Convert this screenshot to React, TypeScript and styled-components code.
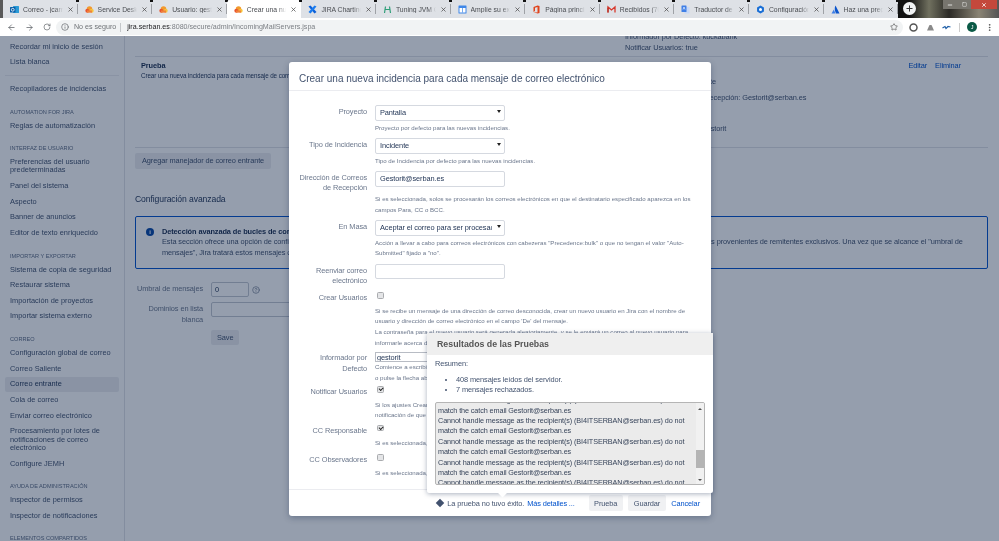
import React from 'react';
import styled, { createGlobalStyle } from 'styled-components';
import { ArrowLeft, ArrowRight, RotateCw, Info, Star, MoreVertical, X, Plus, Minus, Square, CircleHelp } from 'lucide-react';

const GlobalStyle = createGlobalStyle`
  html, body {
    margin: 0;
    padding: 0;
    background: #fff;
  }
  * {
    box-sizing: border-box;
  }
`;

const Root = styled.div`
  width: 999px;
  height: 541px;
  overflow: hidden;
  display: flex;
  flex-direction: column;
  font-family: 'Liberation Sans', Arial, sans-serif;
  font-size: 7.4px;
  color: #253858;
  filter: blur(0.35px);
`;

/* browser chrome */
const TabStrip = styled.div`
  height: 18px;
  display: flex;
  flex-shrink: 0;
  background: linear-gradient(90deg, #5a5a5a 0, #5a5a5a 3px, #111 90%, #111 91%, #70705f 93%, #2b2a26 95%, #8a8474 98%, #555 100%);
`;

const Tabs = styled.div`
  display: flex;
  margin-left: 3px;
  width: 895px;
  background: #dee1e6;
`;

const Tab = styled.div<{ $active?: boolean }>`
  position: relative;
  width: 74.6px;
  height: 18px;
  display: flex;
  align-items: center;
  padding: 0 4px 0 7px;
  gap: 4px;
  font-size: 6.8px;
  color: #4a4d52;
  background: ${(p) => (p.$active ? '#fff' : 'transparent')};
  border-radius: ${(p) => (p.$active ? '4px 4px 0 0' : '0')};
  &::after {
    content: '';
    position: absolute;
    right: 0;
    top: 4px;
    height: 10px;
    width: 1px;
    background: ${(p) => (p.$active ? 'transparent' : '#9ea1a6')};
  }
  &::before {
    content: '';
    position: absolute;
    right: -1px;
    top: 0;
    width: 3px;
    height: 1.5px;
    background: #111;
  }
`;

const TabTitle = styled.span`
  flex: 1;
  white-space: nowrap;
  overflow: hidden;
  -webkit-mask-image: linear-gradient(90deg, #000 80%, transparent 100%);
  mask-image: linear-gradient(90deg, #000 80%, transparent 100%);
`;

const NewTab = styled.div`
  width: 13px;
  height: 13px;
  margin: 2px 0 0 5px;
  border-radius: 50%;
  background: #f1f3f4;
  color: #333;
  display: flex;
  align-items: center;
  justify-content: center;
`;

const WindowControls = styled.div`
  margin-left: auto;
  margin-right: 2px;
  height: 9px;
  display: flex;
`;

const WindowButton = styled.div<{ $close?: boolean }>`
  width: ${(p) => (p.$close ? '26px' : '14px')};
  display: flex;
  align-items: center;
  justify-content: center;
  color: #fff;
  background: ${(p) => (p.$close ? '#c4483c' : '#77756e')};
`;

const AddressBar = styled.div`
  height: 18px;
  flex-shrink: 0;
  display: flex;
  align-items: center;
  background: #fff;
  color: #5f6368;
  padding-left: 7px;
`;

const NavIcons = styled.div`
  width: 49px;
  display: flex;
  gap: 9px;
  color: #5f6368;
`;

const UrlBox = styled.div`
  width: 847px;
  height: 15px;
  border-radius: 8px;
  background: #f1f3f4;
  display: flex;
  align-items: center;
  padding: 0 5px;
  gap: 5px;
  font-size: 7.1px;
`;

const Insecure = styled.span`
  color: #6e7276;
  padding-right: 4px;
  border-right: 1px solid #c4c7ca;
  line-height: 9px;
`;

const Url = styled.span`
  margin-left: 1px;
  flex: 1;
  color: #7b7f84;
  b {
    font-weight: 400;
    color: #202124;
  }
`;

const Extensions = styled.div`
  display: flex;
  align-items: center;
  margin-left: 6px;
  gap: 7.5px;
`;

const Divider = styled.div`
  width: 1px;
  height: 9px;
  background: #ccc;
`;

const Avatar = styled.div`
  width: 10px;
  height: 10px;
  border-radius: 50%;
  background: #0b5a46;
  color: #fff;
  font-size: 5.5px;
  display: flex;
  align-items: center;
  justify-content: center;
`;

/* jira page */
const Page = styled.div`
  position: relative;
  flex: 1;
  display: flex;
  overflow: hidden;
  background: #fff;
`;

const Overlay = styled.div`
  position: absolute;
  inset: 0;
  background: rgba(9, 30, 66, 0.43);
`;

const Sidebar = styled.nav`
  width: 125px;
  flex-shrink: 0;
  padding: 3px 5px 0;
  border-right: 1px solid #dfe1e6;
`;

const NavItem = styled.div<{ $selected?: boolean }>`
  padding: 3.67px 5px;
  line-height: 8.33px;
  border-radius: 2px;
  color: ${(p) => (p.$selected ? '#253858' : '#42526e')};
  background: ${(p) => (p.$selected ? '#ebecf0' : 'transparent')};
`;

const NavHeading = styled.div`
  margin: 10.8px 0 1.8px;
  padding: 0 5px;
  font-size: 5.6px;
  line-height: 8.33px;
  color: #5e6c84;
  text-transform: uppercase;
`;

const NavRule = styled.div`
  height: 1px;
  margin: 5px 0 5px;
  background: #ebecf0;
`;

const Main = styled.main`
  flex: 1;
  min-width: 0;
  padding: 0 11px 0 10px;
  letter-spacing: -0.1px;
`;

const ScrolledLines = styled.div`
  margin: -3.6px 0 0 490px;
  padding-bottom: 2px;
  line-height: 10.7px;
  color: #42526e;
`;

const HandlerRow = styled.div`
  display: grid;
  grid-template-columns: 490px 1fr auto;
  height: 92px;
  border-top: 1px solid #dfe1e6;
  border-bottom: 1px solid #dfe1e6;
`;

const HandlerInfo = styled.div`
  padding: 4px 0 0 6px;
  line-height: 10px;
  small {
    font-size: 6.3px;
    display: block;
    color: #253858;
  }
  strong {
    color: #172b4d;
  }
`;

const HandlerDetails = styled.div`
  padding-top: 2px;
  line-height: 15.5px;
  color: #42526e;
`;

const HandlerActions = styled.div`
  display: flex;
  gap: 8px;
  padding: 4px 27px 0 0;
  line-height: 10px;
  color: #0052cc;
`;

const PageButton = styled.button`
  display: block;
  height: 16px;
  margin: 5px 0 0;
  padding: 0 7px;
  border: none;
  border-radius: 2px;
  background: #ebecf0;
  font: inherit;
  letter-spacing: inherit;
  color: #42526e;
`;

const SectionTitle = styled.h2`
  margin: 24.5px 0 9.5px;
  font-size: 8.6px;
  line-height: 13px;
  font-weight: 400;
  color: #253858;
`;

const InfoPanel = styled.div`
  height: 53px;
  display: flex;
  gap: 8px;
  padding: 10px 0 0 10px;
  border: 1px solid #0052cc;
  border-radius: 2px;
  line-height: 10.4px;
  white-space: nowrap;
  overflow: hidden;
  color: #42526e;
  strong {
    display: block;
    color: #172b4d;
  }
`;

const InfoDot = styled.div`
  flex-shrink: 0;
  width: 8px;
  height: 8px;
  margin-top: 1px;
  border-radius: 50%;
  background: #0747a6;
  color: #fff;
  font-size: 6px;
  font-weight: 700;
  line-height: 8px;
  text-align: center;
`;

const SettingsForm = styled.div`
  margin-top: 13px;
  display: flex;
  flex-direction: column;
  align-items: flex-start;
  gap: 5px;
`;

const SettingRow = styled.div`
  display: grid;
  grid-template-columns: 68px 1fr;
  column-gap: 8px;
`;

const SettingLabel = styled.label`
  padding-top: 2px;
  text-align: right;
  line-height: 10.7px;
  white-space: nowrap;
  color: #6b778c;
`;

const SettingField = styled.div`
  display: flex;
  align-items: flex-start;
  gap: 3px;
  color: #6b778c;
`;

const PageInput = styled.input<{ $width: number }>`
  width: ${(p) => p.$width}px;
  height: 15px;
  padding: 0 3px;
  border: 1px solid #c1c7d0;
  border-radius: 2px;
  font: inherit;
  color: #253858;
  background: #fff;
`;

const SaveButton = styled(PageButton)`
  height: 15px;
  margin: 0 0 0 76px;
  padding: 0 6px;
`;

/* dialog */
const Modal = styled.section`
  position: absolute;
  left: 289px;
  top: 26px;
  width: 422px;
  height: 454px;
  display: flex;
  flex-direction: column;
  border-radius: 3px;
  background: #fff;
  letter-spacing: -0.1px;
  box-shadow: 0 2px 6px rgba(9, 30, 66, 0.3);
`;

const ModalHeader = styled.header`
  height: 29px;
  flex-shrink: 0;
  padding: 11px 0 0 10px;
  border-bottom: 1px solid #ebecf0;
  font-size: 10px;
  letter-spacing: 0;
  line-height: 12px;
  color: #42526e;
`;

const ModalBody = styled.div`
  flex: 1;
  min-height: 0;
  overflow: hidden;
  padding: 14px 0 0;
`;

const FormRow = styled.div<{ $gap?: number }>`
  display: grid;
  grid-template-columns: 78px 1fr;
  column-gap: 8px;
  margin-bottom: ${(p) => p.$gap ?? 4.8}px;
`;

const FormLabel = styled.label`
  padding-top: 1.6px;
  text-align: right;
  line-height: 10.7px;
  white-space: nowrap;
  color: #6b778c;
`;

const Help = styled.div`
  grid-column: 2;
  font-size: 6.12px;
  letter-spacing: 0;
  line-height: 10.7px;
  white-space: nowrap;
  color: #6b778c;
`;

const SelectWrap = styled.div`
  position: relative;
  width: 130px;
  height: 15.5px;
  margin-bottom: 2px;
  &::after {
    content: '';
    position: absolute;
    right: 4px;
    top: 5px;
    border: 2px solid transparent;
    border-top: 3px solid #222;
  }
`;

const Select = styled.select`
  width: 100%;
  height: 100%;
  appearance: none;
  padding: 0 12px 0 4px;
  border: 1px solid #d5d9e0;
  border-radius: 2px;
  background: #fff;
  font: inherit;
  letter-spacing: inherit;
  color: #253858;
`;

const TextInput = styled.input`
  width: 130px;
  height: 15.5px;
  margin-bottom: 2px;
  padding: 0 4px;
  border: 1px solid #d5d9e0;
  border-radius: 2px;
  background: #fff;
  font: inherit;
  letter-spacing: inherit;
  color: #253858;
`;

const SmallInput = styled(TextInput)`
  display: block;
  height: 10.5px;
  margin-bottom: 0;
  padding: 0 1px;
  border-radius: 0;
  border-color: #b8bcc4;
`;

const Checkbox = styled.input`
  appearance: none;
  position: relative;
  width: 6.5px;
  height: 6.5px;
  margin: 0.5px 0 0 2px;
  border: 1px solid #a9abae;
  border-radius: 1.5px;
  background: #e4e5e7;
  &:checked::after {
    content: '';
    position: absolute;
    left: 0.6px;
    top: 0;
    width: 3.4px;
    height: 2px;
    border-left: 1.3px solid #222;
    border-bottom: 1.3px solid #222;
    transform: rotate(-45deg);
  }
`;

const CheckCell = styled.div`
  height: 14px;
`;

const ModalFooter = styled.footer`
  height: 27px;
  flex-shrink: 0;
  display: flex;
  align-items: center;
  justify-content: flex-end;
  padding-right: 11px;
  border-top: 1px solid #ebecf0;
  color: #42526e;
`;

const FailNote = styled.span`
  display: flex;
  align-items: center;
  gap: 3px;
  margin-right: 14px;
  a {
    color: #0052cc;
    letter-spacing: -0.15px;
  }
`;

const FailIcon = styled.span`
  width: 6px;
  height: 6px;
  background: #42526e;
  transform: rotate(45deg);
  margin-right: 1px;
`;

const FooterButton = styled.button`
  height: 16px;
  padding: 0 5.5px;
  margin-right: 5.5px;
  border: none;
  border-radius: 2px;
  background: #f0f1f3;
  font: inherit;
  letter-spacing: inherit;
  color: #42526e;
`;

const CancelLink = styled.a`
  color: #0052cc;
`;

/* results popup */
const Popup = styled.div`
  position: absolute;
  left: 138px;
  top: 271px;
  width: 286px;
  height: 160px;
  background: #fff;
  border-radius: 2px;
  box-shadow: 0 1px 5px rgba(9, 30, 66, 0.35);
  &::after {
    content: '';
    position: absolute;
    left: 72px;
    bottom: -3px;
    width: 7px;
    height: 7px;
    background: #fff;
    transform: rotate(45deg);
  }
`;

const PopupTitle = styled.div`
  height: 22px;
  padding-left: 10px;
  background: #efefef;
  font-size: 8.8px;
  font-weight: 700;
  letter-spacing: 0;
  line-height: 22px;
  color: #555;
`;

const PopupContent = styled.div`
  padding: 4px 8px 0;
  line-height: 10.4px;
  color: #42526e;
`;

const ResultList = styled.ul`
  margin: 5.5px 0 6px;
  padding-left: 21px;
  li {
    padding: 0;
  }
`;

const LogBox = styled.div`
  height: 83px;
  display: flex;
  overflow: hidden;
  border: 1px solid #b5b5b5;
  border-radius: 2px;
  background: #ebebeb;
`;

const LogText = styled.div`
  flex: 1;
  margin-top: -7.5px;
  padding-left: 2px;
  font-size: 7.25px;
  color: #37445a;
`;

const Scrollbar = styled.div`
  width: 8px;
  flex-shrink: 0;
  display: flex;
  flex-direction: column;
  align-items: center;
  padding-top: 3px;
  background: #f1f1f1;
`;

const ScrollArrow = styled.div<{ $down?: boolean }>`
  border: 2px solid transparent;
  ${(p) => (p.$down ? 'border-top: 2.5px solid #505050; margin-top: auto; margin-bottom: 1px;' : 'border-bottom: 2.5px solid #505050;')}
`;

const ScrollThumb = styled.div`
  width: 100%;
  height: 18px;
  margin-top: 40px;
  background: #b4b4b4;
`;

const tabs = [
  { title: 'Correo - jcarra', icon: 'outlook' },
  { title: 'Service Desk', icon: 'cloud' },
  { title: 'Usuario: gestor', icon: 'cloud' },
  { title: 'Crear una nuev', icon: 'cloud', active: true },
  { title: 'JIRA Charting F', icon: 'cross' },
  { title: 'Tuning JVM Ga', icon: 'tuning' },
  { title: 'Amplíe su expe', icon: 'doc' },
  { title: 'Página principa', icon: 'office' },
  { title: 'Recibidos (704', icon: 'gmail' },
  { title: 'Traductor de G', icon: 'translate' },
  { title: 'Configuración:', icon: 'gear' },
  { title: 'Haz una pregu', icon: 'atlassian' },
];

const TabIcon: React.FC<{ kind: string }> = ({ kind }) => (
  <svg width="9" height="9" viewBox="0 0 18 18" style={{ flexShrink: 0 }}>
    {kind === 'outlook' && (
      <>
        <rect x="6" y="2" width="12" height="14" rx="1" fill="#2a9ad6" />
        <rect x="0" y="4" width="11" height="11" rx="1" fill="#0a5ea8" />
        <circle cx="5.5" cy="9.5" r="2.8" fill="none" stroke="#fff" strokeWidth="1.6" />
      </>
    )}
    {kind === 'cloud' && (
      <>
        <circle cx="9" cy="8" r="5.5" fill="#f29a2e" />
        <circle cx="4.5" cy="11.5" r="3.8" fill="#e8552d" />
        <circle cx="13.5" cy="11.5" r="3.8" fill="#f7c33c" />
        <rect x="4" y="11" width="10" height="4.3" fill="#f0803a" />
      </>
    )}
    {kind === 'cross' && (
      <>
        <path d="M1 3 L5 1 L17 14 L13 17 Z" fill="#0b5fd8" />
        <path d="M17 3 L13 1 L1 14 L5 17 Z" fill="#1a7cf0" />
      </>
    )}
    {kind === 'tuning' && (
      <path d="M3 16 L5 3 M5 9 L13 9 M13 3 L15 16" fill="none" stroke="#2f9e78" strokeWidth="2.4" />
    )}
    {kind === 'doc' && (
      <>
        <rect x="1" y="1" width="16" height="16" rx="1" fill="#3f87e8" />
        <rect x="3" y="6" width="12" height="9" fill="#fff" />
        <rect x="8" y="6" width="1.4" height="9" fill="#3f87e8" />
      </>
    )}
    {kind === 'office' && (
      <path d="M3 4 L11 1 L15 2 V16 L11 17 L3 14 L11 15 V4 L6 5.5 V12 L3 14 Z" fill="#e0431c" />
    )}
    {kind === 'gmail' && (
      <>
        <path d="M2 15 V4 L9 10 L16 4 V15" fill="none" stroke="#d8372b" strokeWidth="2.6" />
        <path d="M2 15 V5" stroke="#b5342a" strokeWidth="2.6" />
      </>
    )}
    {kind === 'translate' && (
      <>
        <rect x="7" y="4" width="10" height="13" rx="1" fill="#c6d8f7" />
        <rect x="1" y="1" width="10" height="13" rx="1" fill="#3f7fe6" />
        <path d="M4 9 L6 4 L8 9" fill="none" stroke="#fff" strokeWidth="1.3" />
      </>
    )}
    {kind === 'gear' && (
      <>
        <path d="M9 1 L15.9 5 V13 L9 17 L2.1 13 V5 Z" fill="#1a6fd6" />
        <circle cx="9" cy="9" r="3" fill="#fff" />
      </>
    )}
    {kind === 'atlassian' && (
      <>
        <path d="M5.5 9 L1 17 H9 Z" fill="#3f7fe6" />
        <path d="M9 1 Q5.5 8 10 17 H17 Z" fill="#0b55cc" />
      </>
    )}
  </svg>
);

const navGroups: { heading?: string; items: string[]; rule?: boolean }[] = [
  { items: ['Recordar mi inicio de sesión', 'Lista blanca'], rule: true },
  { items: ['Recopiladores de incidencias'] },
  { heading: 'Automation for Jira', items: ['Reglas de automatización'] },
  {
    heading: 'Interfaz de usuario',
    items: ['Preferencias del usuario predeterminadas', 'Panel del sistema', 'Aspecto', 'Banner de anuncios', 'Editor de texto enriquecido'],
  },
  {
    heading: 'Importar y exportar',
    items: ['Sistema de copia de seguridad', 'Restaurar sistema', 'Importación de proyectos', 'Importar sistema externo'],
  },
  {
    heading: 'Correo',
    items: [
      'Configuración global de correo',
      'Correo Saliente',
      'Correo entrante',
      'Cola de correo',
      'Enviar correo electrónico',
      'Procesamiento por lotes de notificaciones de correo electrónico',
      'Configure JEMH',
    ],
  },
  { heading: 'Ayuda de administración', items: ['Inspector de permisos', 'Inspector de notificaciones'] },
  { heading: 'Elementos compartidos', items: [] },
];

const logLines = [
  'Cannot handle message as the recipient(s) (BI4ITSERBAN@serban.es) do not',
  'match the catch email Gestorit@serban.es',
];

const App: React.FC = () => {
  return (
    <Root>
      <GlobalStyle />
      <TabStrip>
        <Tabs>
          {tabs.map((t) => (
            <Tab key={t.title} $active={t.active}>
              <TabIcon kind={t.icon} />
              <TabTitle>{t.title}</TabTitle>
              <X size={7} strokeWidth={2.4} color="#444" />
            </Tab>
          ))}
        </Tabs>
        <NewTab>
          <Plus size={9} strokeWidth={2.6} />
        </NewTab>
        <WindowControls>
          <WindowButton>
            <Minus size={6} strokeWidth={3} />
          </WindowButton>
          <WindowButton>
            <Square size={5} strokeWidth={2} />
          </WindowButton>
          <WindowButton $close>
            <X size={6} strokeWidth={3} />
          </WindowButton>
        </WindowControls>
      </TabStrip>

      <AddressBar>
        <NavIcons>
          <ArrowLeft size={9} />
          <ArrowRight size={9} />
          <RotateCw size={8} />
        </NavIcons>
        <UrlBox>
          <Info size={8} color="#5f6368" />
          <Insecure>No es seguro</Insecure>
          <Url>
            <b>jira.serban.es</b>:8080/secure/admin/IncomingMailServers.jspa
          </Url>
          <Star size={8} color="#555" />
        </UrlBox>
        <Extensions>
          <svg width="9" height="9" viewBox="0 0 18 18">
            <circle cx="9" cy="9" r="7" fill="none" stroke="#555" strokeWidth="3" />
          </svg>
          <svg width="9" height="9" viewBox="0 0 18 18">
            <path d="M2 15 L7 4 H11 L16 15 Z" fill="#8a8a8a" />
          </svg>
          <svg width="9" height="9" viewBox="0 0 18 18">
            <path d="M1 10 L6 7 L8 11 L12 7 L17 8" fill="none" stroke="#1f5fa8" strokeWidth="2.4" />
          </svg>
          <Divider />
          <Avatar>J</Avatar>
          <MoreVertical size={9} color="#444" />
        </Extensions>
      </AddressBar>

      <Page>
        <Sidebar>
          {navGroups.map((g, i) => (
            <div key={i}>
              {g.heading && <NavHeading>{g.heading}</NavHeading>}
              {g.items.map((item) => (
                <NavItem key={item} $selected={item === 'Correo entrante'}>
                  {item}
                </NavItem>
              ))}
              {g.rule && <NavRule />}
            </div>
          ))}
        </Sidebar>

        <Main>
          <ScrolledLines>
            Informador por Defecto: kuckabank
            <br />
            Notificar Usuarios: true
          </ScrolledLines>
          <HandlerRow>
            <HandlerInfo>
              <strong>Prueba</strong>
              <small>Crear una nueva incidencia para cada mensaje de correo electrónico</small>
            </HandlerInfo>
            <HandlerDetails>
              Proyecto: Pantalla
              <br />
              Tipo de Incidencia: Incidente
              <br />
              Dirección de Correos de Recepción: Gestorit@serban.es
              <br />
              En Masa: Aceptar
              <br />
              Informador por Defecto: gestorit
            </HandlerDetails>
            <HandlerActions>
              <span>Editar</span>
              <span>Eliminar</span>
            </HandlerActions>
          </HandlerRow>
          <PageButton>Agregar manejador de correo entrante</PageButton>
          <SectionTitle>Configuración avanzada</SectionTitle>
          <InfoPanel>
            <InfoDot>i</InfoDot>
            <div>
              <strong>Detección avanzada de bucles de correo</strong>
              Esta sección ofrece una opción de configuración para detectar bucles de correo y rechazar los mensajes entrantes cuando se recibe una cantidad muy excesiva de mensajes provenientes de remitentes exclusivos. Una vez que se alcance el "umbral de
              <br />
              mensajes", Jira tratará estos mensajes como un bucle de correo y los rechazará.
            </div>
          </InfoPanel>
          <SettingsForm>
            <SettingRow>
              <SettingLabel>Umbral de mensajes</SettingLabel>
              <SettingField>
                <PageInput $width={38} defaultValue="0" />
                <CircleHelp size={8} style={{ marginTop: 4 }} />
              </SettingField>
            </SettingRow>
            <SettingRow>
              <SettingLabel>
                Dominios en lista
                <br />
                blanca
              </SettingLabel>
              <SettingField>
                <PageInput $width={200} />
              </SettingField>
            </SettingRow>
            <SaveButton>Save</SaveButton>
          </SettingsForm>
        </Main>

        <Overlay />

        <Modal>
          <ModalHeader>Crear una nueva incidencia para cada mensaje de correo electrónico</ModalHeader>
          <ModalBody>
            <FormRow>
              <FormLabel>Proyecto</FormLabel>
              <SelectWrap>
                <Select defaultValue="Pantalla">
                  <option>Pantalla</option>
                </Select>
              </SelectWrap>
              <Help>Proyecto por defecto para las nuevas incidencias.</Help>
            </FormRow>
            <FormRow>
              <FormLabel>Tipo de Incidencia</FormLabel>
              <SelectWrap>
                <Select defaultValue="Incidente">
                  <option>Incidente</option>
                </Select>
              </SelectWrap>
              <Help>Tipo de Incidencia por defecto para las nuevas incidencias.</Help>
            </FormRow>
            <FormRow>
              <FormLabel>
                Dirección de Correos
                <br />
                de Recepción
              </FormLabel>
              <TextInput defaultValue="Gestorit@serban.es" />
              <Help>
                Si es seleccionada, solos se procesarán los correos electrónicos en que el destinatario especificado aparezca en los
                <br />
                campos Para, CC o BCC.
              </Help>
            </FormRow>
            <FormRow>
              <FormLabel>En Masa</FormLabel>
              <SelectWrap>
                <Select defaultValue="a">
                  <option value="a">Aceptar el correo para ser procesado</option>
                </Select>
              </SelectWrap>
              <Help>
                Acción a llevar a cabo para correos electrónicos con cabezeras "Precedence:bulk" o que no tengan el valor "Auto-
                <br />
                Submitted" fijado a "no".
              </Help>
            </FormRow>
            <FormRow>
              <FormLabel>
                Reenviar correo
                <br />
                electrónico
              </FormLabel>
              <TextInput />
            </FormRow>
            <FormRow $gap={3.3}>
              <FormLabel>Crear Usuarios</FormLabel>
              <CheckCell>
                <Checkbox type="checkbox" />
              </CheckCell>
              <Help>
                Si se recibe un mensaje de una dirección de correo desconocida, crear un nuevo usuario en Jira con el nombre de
                <br />
                usuario y dirección de correo electrónico en el campo 'De' del mensaje.
                <br />
                La contraseña para el nuevo usuario será generada aleatoriamente, y se le enviará un correo al nuevo usuario para
                <br />
                informarle acerca de su cuenta.
              </Help>
            </FormRow>
            <FormRow $gap={2}>
              <FormLabel>
                Informador por
                <br />
                Defecto
              </FormLabel>
              <div>
                <SmallInput defaultValue="gestorit" />
                <Help>
                  Comience a escribir para obtener una lista de posibles coincidencias
                  <br />
                  o pulse la flecha abajo para seleccionar un usuario.
                </Help>
              </div>
            </FormRow>
            <FormRow $gap={3}>
              <FormLabel>Notificar Usuarios</FormLabel>
              <CheckCell>
                <Checkbox type="checkbox" defaultChecked />
              </CheckCell>
              <Help>
                Si los ajustes Crear Usuarios y Notificar Usuarios están seleccionados, Jira enviará una
                <br />
                notificación de que se ha creado la cuenta.
              </Help>
            </FormRow>
            <FormRow>
              <FormLabel>CC Responsable</FormLabel>
              <CheckCell>
                <Checkbox type="checkbox" defaultChecked />
              </CheckCell>
              <Help>Si es seleccionada, se añadirá al responsable en copia.</Help>
            </FormRow>
            <FormRow>
              <FormLabel>CC Observadores</FormLabel>
              <CheckCell>
                <Checkbox type="checkbox" />
              </CheckCell>
              <Help>Si es seleccionada, se añadirá a los observadores en copia.</Help>
            </FormRow>
          </ModalBody>
          <ModalFooter>
            <FailNote>
              <FailIcon />
              <span>La prueba no tuvo éxito.</span>
              <a>Más detalles ...</a>
            </FailNote>
            <FooterButton>Prueba</FooterButton>
            <FooterButton>Guardar</FooterButton>
            <CancelLink>Cancelar</CancelLink>
          </ModalFooter>

          <Popup>
            <PopupTitle>Resultados de las Pruebas</PopupTitle>
            <PopupContent>
              <div>Resumen:</div>
              <ResultList>
                <li>408 mensajes leídos del servidor.</li>
                <li>7 mensajes rechazados.</li>
              </ResultList>
              <LogBox>
                <LogText>
                  {[0, 1, 2, 3, 4].map((n) => (
                    <React.Fragment key={n}>
                      <div>{logLines[0]}</div>
                      <div>{logLines[1]}</div>
                    </React.Fragment>
                  ))}
                </LogText>
                <Scrollbar>
                  <ScrollArrow />
                  <ScrollThumb />
                  <ScrollArrow $down />
                </Scrollbar>
              </LogBox>
            </PopupContent>
          </Popup>
        </Modal>
      </Page>
    </Root>
  );
};

export default App;
